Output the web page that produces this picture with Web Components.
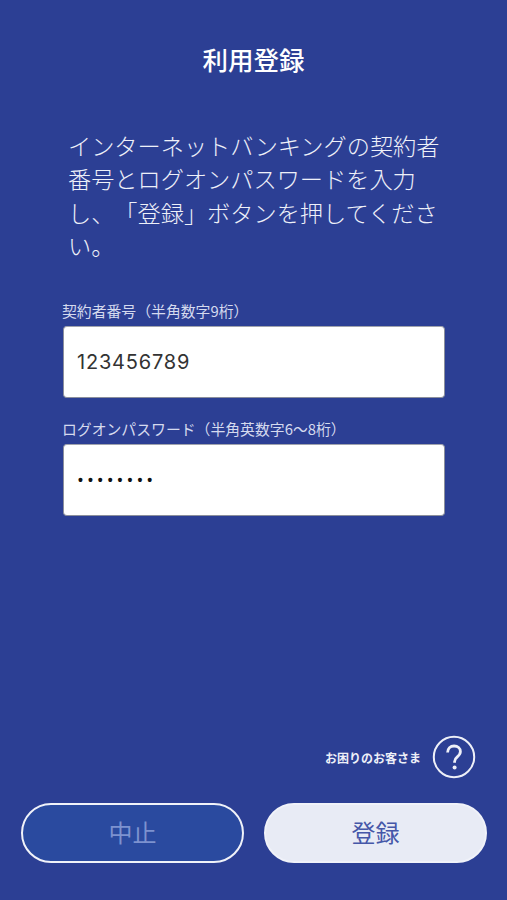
<!DOCTYPE html>
<html lang="ja"><head><meta charset="utf-8"><style>
html,body{margin:0;height:100%;background:#2c3f94}
</style></head><body>
<reg-screen>
<span slot="title">利用登録</span>
<span slot="intro">インターネットバンキングの契約者<br>番号とログオンパスワードを入力<br>し、「登録」ボタンを押してください。</span>
<reg-field label="契約者番号（半角数字9桁）" value="123456789"></reg-field>
<reg-field label="ログオンパスワード（半角英数字6〜8桁）" value="••••••••" secret></reg-field>
<help-link slot="help">お困りのお客さま</help-link>
<pill-button slot="actions" kind="ghost">中止</pill-button>
<pill-button slot="actions" kind="solid">登録</pill-button>
</reg-screen>
<script>
const FONT='"Noto Sans CJK JP","Noto Sans",sans-serif';
function def(name,html,init){customElements.define(name,class extends HTMLElement{connectedCallback(){if(this.shadowRoot)return;const r=this.attachShadow({mode:'open'});r.innerHTML=html;if(init)init(this,r);}});}
def('reg-screen',`<style>
:host{display:flex;flex-direction:column;height:900px;box-sizing:border-box;background:#2c3f94;color:#fff;font-family:${FONT};overflow:hidden;text-spacing-trim:space-all}
h1{margin:0;padding-top:41px;height:36px;line-height:36px;box-sizing:content-box;text-align:center;font-size:25.5px;font-weight:500;color:#fff}
.intro{margin:52px 0 0;padding:0 60px 0 68px;font-size:23.2px;line-height:33.3px;color:#eef0f9;height:134px;width:379px;box-sizing:content-box;font-weight:300}
.fields{display:flex;flex-direction:column;gap:21px;padding:38px 62px 0 62px}
.grow{flex:1}
.help{display:flex;justify-content:flex-end;padding:0 31px 0 0}
.actions{display:grid;grid-template-columns:223px 223px;gap:20px;padding:24px 20px 37px 21px}
</style>
<h1><slot name="title"></slot></h1>
<div class="intro"><slot name="intro"></slot></div>
<div class="fields"><slot></slot></div>
<div class="grow"></div>
<div class="help"><slot name="help"></slot></div>
<div class="actions"><slot name="actions"></slot></div>`);
def('reg-field',`<style>
:host{display:block}
label{display:block;font-size:14.85px;line-height:20px;color:#d5daee;margin-bottom:5px;white-space:nowrap}
.box{height:72px;box-sizing:border-box;margin-left:1px;background:#fff;border:1px solid #8b8f9c;border-top-color:#a0a3ad;border-radius:4px;display:flex;align-items:center;padding-left:13px;color:#333;font-size:20px;letter-spacing:.8px;font-family:Inter,"Noto Sans",sans-serif}
.box.secret{color:#111;padding-left:14px;letter-spacing:5px;font-size:14px;font-weight:700;font-family:"Liberation Sans",sans-serif}
</style><label></label><div class="box"></div>`,(h,r)=>{r.querySelector('label').textContent=h.getAttribute('label');const b=r.querySelector('.box');b.textContent=h.getAttribute('value');if(h.hasAttribute('secret'))b.classList.add('secret');});
def('help-link',`<style>
:host{display:flex;align-items:center;gap:11px;font-size:12px;font-weight:700;color:#eef0f8}
svg{display:block}
</style><span><slot></slot></span>
<svg width="44" height="44" viewBox="0 0 44 44" aria-hidden="true"><circle cx="22" cy="22" r="20.2" fill="none" stroke="#eef0f8" stroke-width="2"/><path d="M15.6 17.6c0-4 2.8-6.6 6.5-6.6 3.6 0 6.3 2.4 6.3 5.6 0 2.5-1.3 3.8-3.1 5.2-1.8 1.4-2.7 2.5-2.7 4.6v1.4" fill="none" stroke="#eef0f8" stroke-width="2.8"/><circle cx="22.6" cy="32.4" r="2" fill="#eef0f8"/></svg>`);
def('pill-button',`<style>
:host{display:flex;align-items:center;justify-content:center;height:60px;box-sizing:border-box;border-radius:30px;font-size:24px;padding-bottom:3px;border:2.5px solid #f0f2f9}
:host([kind=ghost]){background:#2a4a9f;color:#7d92cf}
:host([kind=solid]){background:#e8ebf5;color:#4557a8}
</style><slot></slot>`);
</script>
</body></html>
